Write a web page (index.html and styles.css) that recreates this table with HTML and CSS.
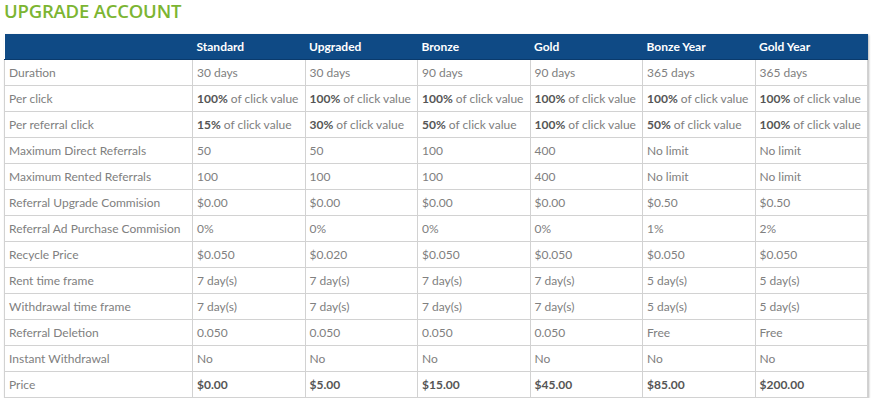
FILE: index.html
```html
<!DOCTYPE html>
<html>
<head>
<meta charset="utf-8">
<link rel="stylesheet" href="styles.css">
</head>
<body>
<h1 class="title">UPGRADE ACCOUNT</h1>
<table class="plans">
  <colgroup>
    <col class="c-label"><col class="c-plan"><col class="c-plan"><col class="c-plan"><col class="c-plan"><col class="c-plan"><col class="c-plan">
  </colgroup>
  <thead>
    <tr><th></th><th>Standard</th><th>Upgraded</th><th>Bronze</th><th>Gold</th><th>Bonze Year</th><th>Gold Year</th></tr>
  </thead>
  <tbody>
    <tr><td>Duration</td><td>30 days</td><td>30 days</td><td>90 days</td><td>90 days</td><td>365 days</td><td>365 days</td></tr>
    <tr><td>Per click</td><td><b>100%</b> of click value</td><td><b>100%</b> of click value</td><td><b>100%</b> of click value</td><td><b>100%</b> of click value</td><td><b>100%</b> of click value</td><td><b>100%</b> of click value</td></tr>
    <tr><td>Per referral click</td><td><b>15%</b> of click value</td><td><b>30%</b> of click value</td><td><b>50%</b> of click value</td><td><b>100%</b> of click value</td><td><b>50%</b> of click value</td><td><b>100%</b> of click value</td></tr>
    <tr><td>Maximum Direct Referrals</td><td>50</td><td>50</td><td>100</td><td>400</td><td>No limit</td><td>No limit</td></tr>
    <tr><td>Maximum Rented Referrals</td><td>100</td><td>100</td><td>100</td><td>400</td><td>No limit</td><td>No limit</td></tr>
    <tr><td>Referral Upgrade Commision</td><td>$0.00</td><td>$0.00</td><td>$0.00</td><td>$0.00</td><td>$0.50</td><td>$0.50</td></tr>
    <tr><td>Referral Ad Purchase Commision</td><td>0%</td><td>0%</td><td>0%</td><td>0%</td><td>1%</td><td>2%</td></tr>
    <tr><td>Recycle Price</td><td>$0.050</td><td>$0.020</td><td>$0.050</td><td>$0.050</td><td>$0.050</td><td>$0.050</td></tr>
    <tr><td>Rent time frame</td><td>7 day(s)</td><td>7 day(s)</td><td>7 day(s)</td><td>7 day(s)</td><td>5 day(s)</td><td>5 day(s)</td></tr>
    <tr><td>Withdrawal time frame</td><td>7 day(s)</td><td>7 day(s)</td><td>7 day(s)</td><td>7 day(s)</td><td>5 day(s)</td><td>5 day(s)</td></tr>
    <tr><td>Referral Deletion</td><td>0.050</td><td>0.050</td><td>0.050</td><td>0.050</td><td>Free</td><td>Free</td></tr>
    <tr><td>Instant Withdrawal</td><td>No</td><td>No</td><td>No</td><td>No</td><td>No</td><td>No</td></tr>
    <tr class="price"><td>Price</td><td>$0.00</td><td>$5.00</td><td>$15.00</td><td>$45.00</td><td>$85.00</td><td>$200.00</td></tr>
  </tbody>
</table>
</body>
</html>
```
FILE: styles.css
```css
html, body {
  margin: 0;
  padding: 0;
  background: #fff;
}
body {
  padding: 0 4px;
  font-family: Lato, "Liberation Sans", sans-serif;
}
.title {
  margin: 0;
  height: 34px;
  font-family: "Open Sans", "Liberation Sans", sans-serif;
  font-size: 18.5px;
  font-weight: 600;
  line-height: 22px;
  color: #7cb532;
  letter-spacing: -0.2px;
}
.plans {
  border-collapse: collapse;
  table-layout: fixed;
  width: 863px;
  box-shadow: 1px 1px 2px #bbb;
}
.c-label { width: 188px; }
.c-plan { width: 112.5px; }
.plans th {
  background: #0f4a85;
  color: #fff;
  font-weight: bold;
  font-size: 12px;
  text-align: left;
  height: 25px;
  padding: 0 4px;
  border-bottom: 1px solid #0a3a6c;
}
.plans td {
  height: 25px;
  padding: 0 4px;
  font-size: 12px;
  color: #808080;
  border: 1px solid #d2d2d2;
  white-space: nowrap;
  overflow: hidden;
}
.plans td b {
  color: #555;
}
.plans tr.price td:not(:first-child) {
  font-weight: bold;
  color: #555;
}
```
